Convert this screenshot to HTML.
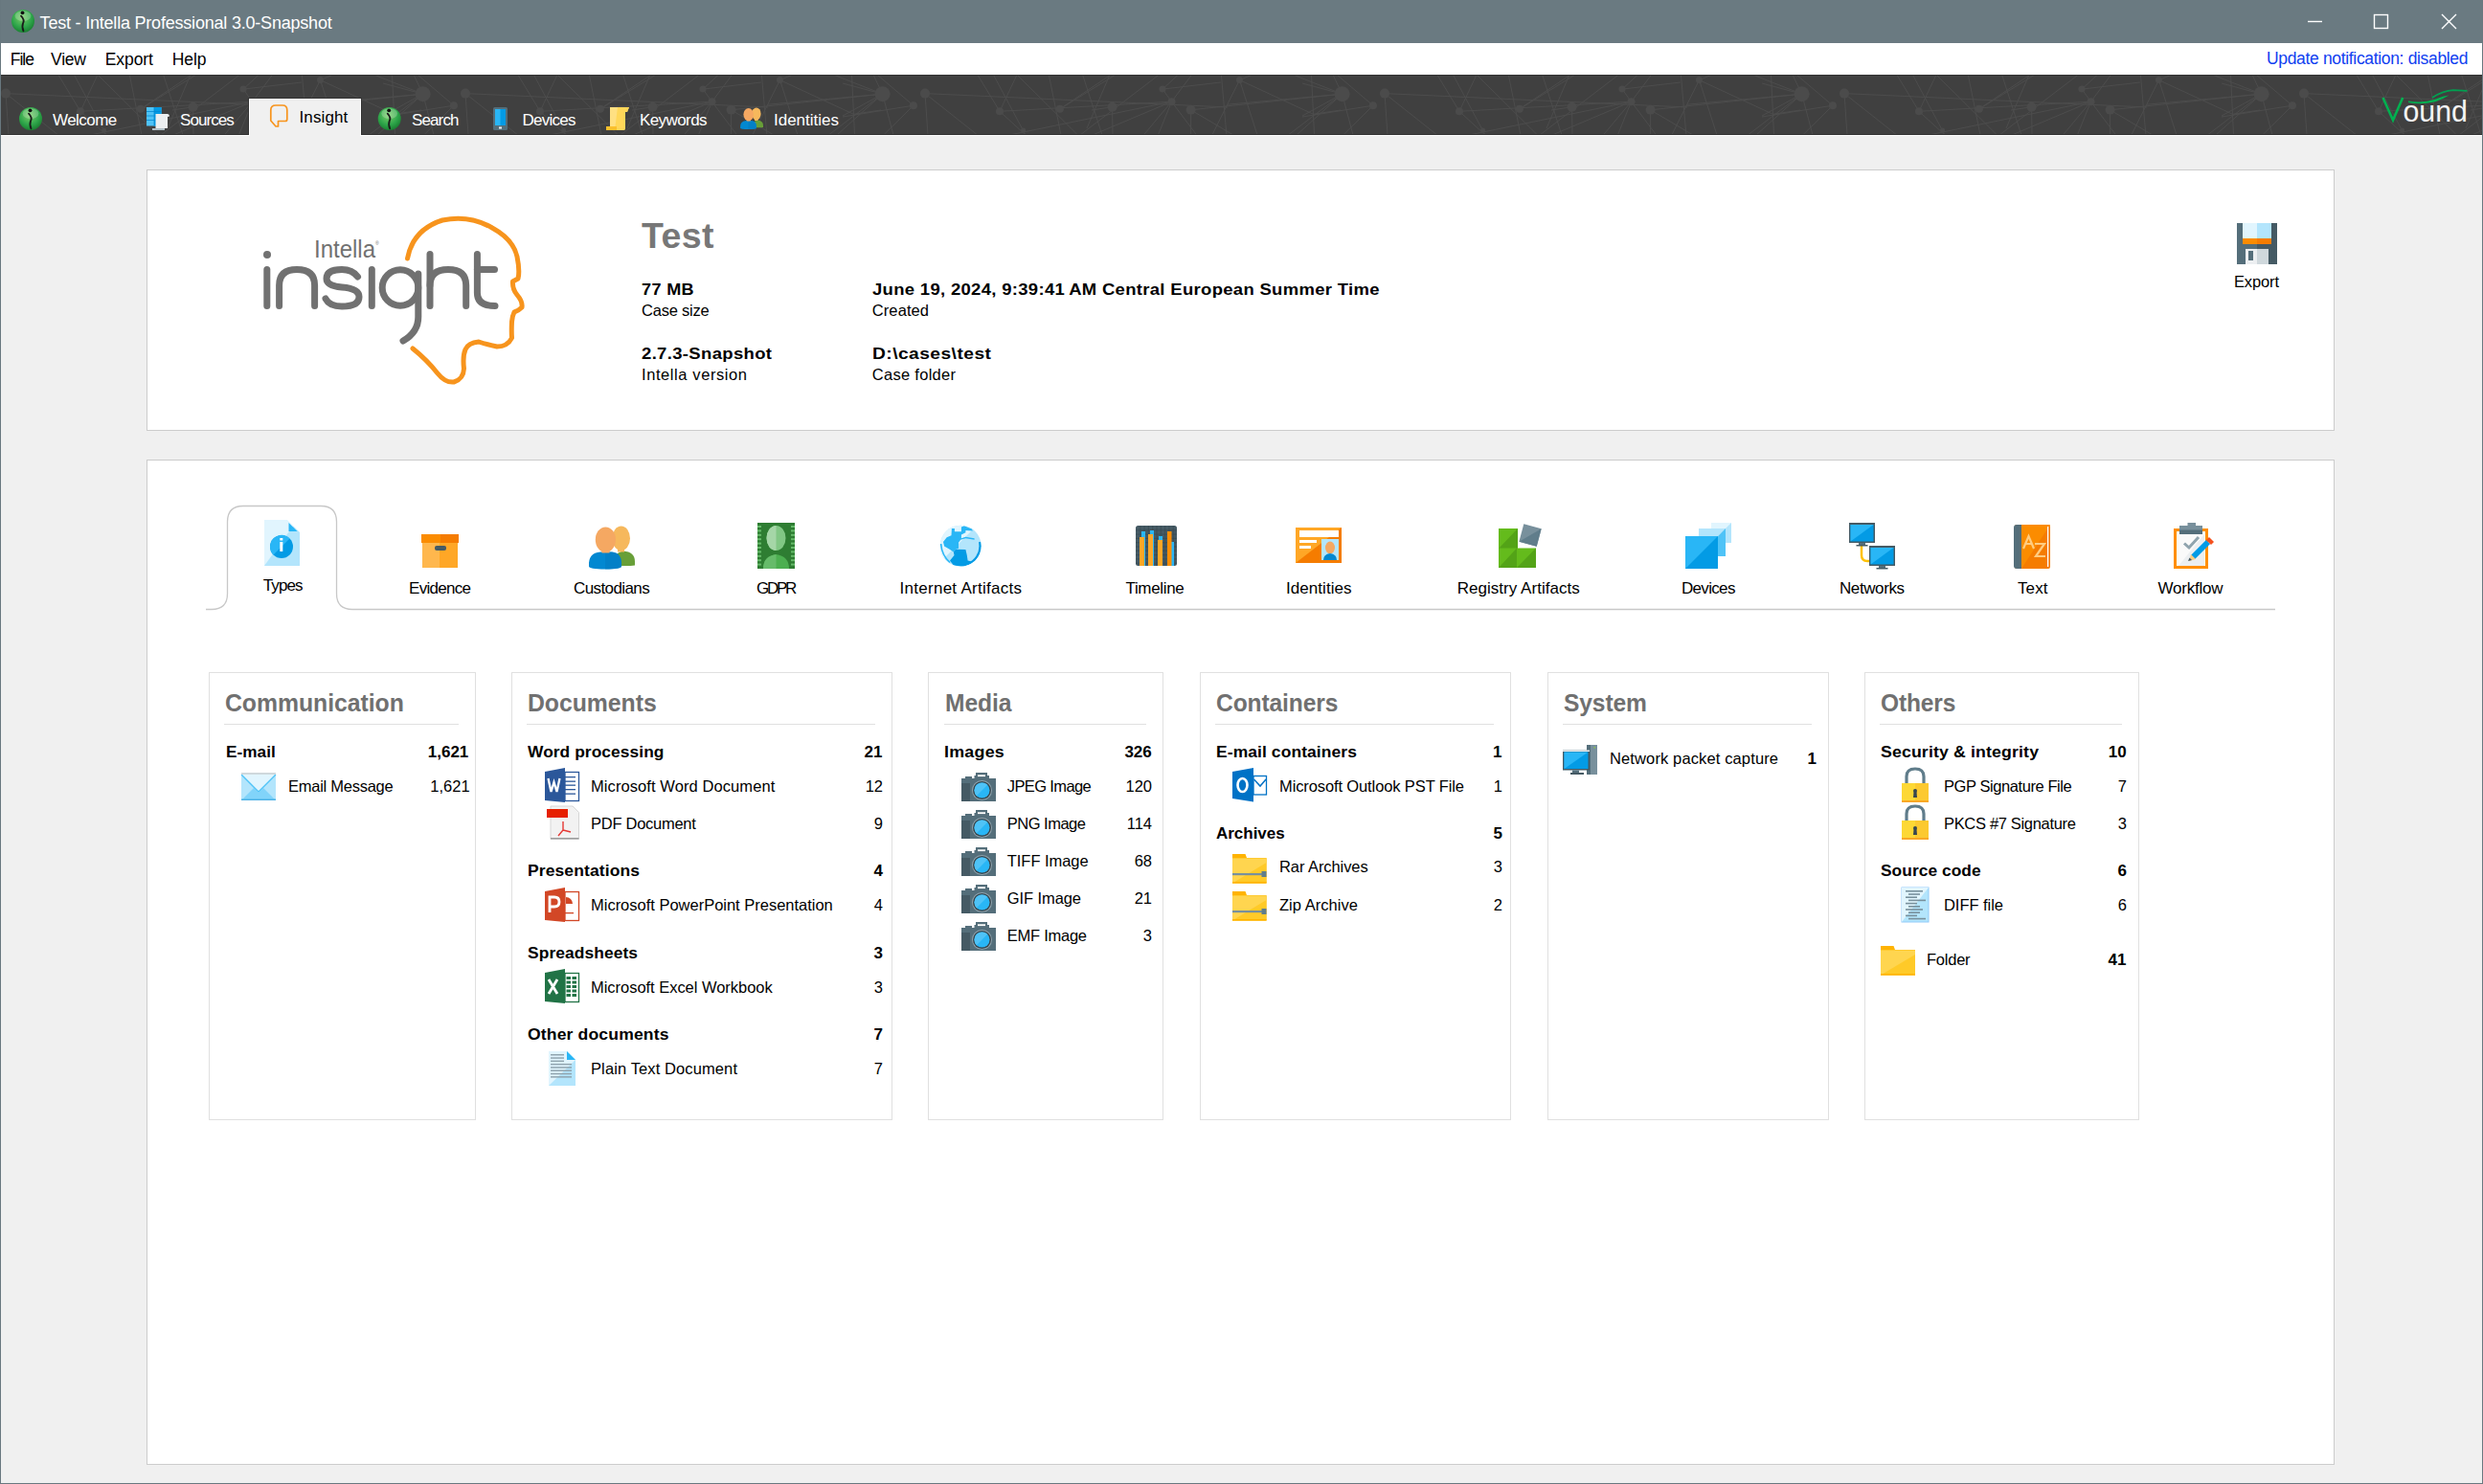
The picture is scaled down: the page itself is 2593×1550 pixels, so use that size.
<!DOCTYPE html>
<html><head><meta charset="utf-8"><style>
html,body{margin:0;padding:0}
body{width:2593px;height:1550px;position:relative;overflow:hidden;background:#f0f0f0;font-family:"Liberation Sans",sans-serif}
.t{position:absolute;white-space:pre}
.a{position:absolute}
</style></head><body>
<div class=a style="left:0;top:0;width:2593px;height:45px;background:#6a7a81"></div>
<div class=a style="left:1px;top:45px;width:2591px;height:33px;background:#fff"></div>
<div class=a style="left:1px;top:78px;width:2591px;height:63px;background:#404040;overflow:hidden"><svg style="position:absolute;left:0;top:0" width="2591" height="63"><g stroke="#595959" stroke-width="1" opacity="0.5"><line x1="-39.4" y1="20.2" x2="-81.0" y2="9.0"/><line x1="-39.4" y1="20.2" x2="-49.0" y2="0.0"/><line x1="-45.0" y1="0.0" x2="-7.1" y2="32.2"/><line x1="-39.4" y1="20.2" x2="-28.0" y2="63.0"/><line x1="-39.4" y1="20.2" x2="-81.0" y2="43.0"/><line x1="-7.1" y1="32.2" x2="-81.0" y2="44.0"/><line x1="-7.1" y1="32.2" x2="-38.3" y2="63.0"/><line x1="5.0" y1="19.6" x2="8.0" y2="63.0"/><line x1="5.0" y1="19.6" x2="321.0" y2="34.0"/><line x1="5.0" y1="19.6" x2="59.8" y2="63.0"/><line x1="59.8" y1="0.0" x2="83.0" y2="38.3"/><line x1="83.0" y1="38.3" x2="110.0" y2="63.0"/><line x1="76.4" y1="0.0" x2="110.0" y2="63.0"/><line x1="101.0" y1="0.0" x2="83.0" y2="38.3"/><line x1="101.0" y1="0.0" x2="164.5" y2="63.0"/><line x1="134.3" y1="0.0" x2="147.0" y2="63.0"/><line x1="145.9" y1="35.8" x2="199.0" y2="0.0"/><line x1="83.0" y1="38.3" x2="262.5" y2="28.2"/><line x1="169.6" y1="0.0" x2="190.0" y2="63.0"/><line x1="93.0" y1="63.0" x2="262.5" y2="28.2"/><line x1="145.9" y1="35.8" x2="204.0" y2="0.0"/><line x1="174.0" y1="56.0" x2="198.0" y2="0.0"/><line x1="200.6" y1="33.7" x2="201.0" y2="63.0"/><line x1="200.6" y1="33.7" x2="179.0" y2="37.0"/><line x1="233.3" y1="63.0" x2="262.5" y2="28.2"/><line x1="262.5" y1="28.2" x2="283.6" y2="0.0"/><line x1="248.4" y1="63.0" x2="262.5" y2="28.2"/><line x1="262.5" y1="28.2" x2="288.7" y2="63.0"/><line x1="253.0" y1="15.1" x2="262.5" y2="28.2"/><line x1="253.0" y1="15.1" x2="313.8" y2="8.0"/><line x1="253.0" y1="15.1" x2="269.5" y2="0.0"/><line x1="167.0" y1="63.0" x2="249.4" y2="0.0"/><line x1="180.0" y1="63.0" x2="262.5" y2="28.2"/><line x1="282.6" y1="36.8" x2="282.6" y2="63.0"/><line x1="282.6" y1="36.8" x2="440.6" y2="20.2"/><line x1="282.6" y1="36.8" x2="327.0" y2="63.0"/><line x1="314.4" y1="0.0" x2="319.9" y2="63.0"/><line x1="333.5" y1="5.6" x2="304.8" y2="63.0"/><line x1="333.5" y1="5.6" x2="352.0" y2="63.0"/><line x1="333.5" y1="5.6" x2="347.0" y2="0.0"/><line x1="333.5" y1="5.6" x2="410.5" y2="41.3"/><line x1="389.4" y1="0.0" x2="440.6" y2="20.2"/><line x1="408.5" y1="0.0" x2="411.5" y2="63.0"/><line x1="440.6" y1="20.2" x2="384.3" y2="63.0"/><line x1="440.6" y1="20.2" x2="393.0" y2="63.0"/><line x1="321.0" y1="31.2" x2="440.6" y2="20.2"/><line x1="410.5" y1="41.3" x2="439.0" y2="37.0"/><line x1="440.6" y1="20.2" x2="399.0" y2="9.0"/><line x1="440.6" y1="20.2" x2="431.0" y2="0.0"/><line x1="435.0" y1="0.0" x2="472.9" y2="32.2"/><line x1="440.6" y1="20.2" x2="452.0" y2="63.0"/><line x1="440.6" y1="20.2" x2="399.0" y2="43.0"/><line x1="472.9" y1="32.2" x2="399.0" y2="44.0"/><line x1="472.9" y1="32.2" x2="441.7" y2="63.0"/><line x1="485.0" y1="19.6" x2="488.0" y2="63.0"/><line x1="485.0" y1="19.6" x2="801.0" y2="34.0"/><line x1="485.0" y1="19.6" x2="539.8" y2="63.0"/><line x1="539.8" y1="0.0" x2="563.0" y2="38.3"/><line x1="563.0" y1="38.3" x2="590.0" y2="63.0"/><line x1="556.4" y1="0.0" x2="590.0" y2="63.0"/><line x1="581.0" y1="0.0" x2="563.0" y2="38.3"/><line x1="581.0" y1="0.0" x2="644.5" y2="63.0"/><line x1="614.3" y1="0.0" x2="627.0" y2="63.0"/><line x1="625.9" y1="35.8" x2="679.0" y2="0.0"/><line x1="563.0" y1="38.3" x2="742.5" y2="28.2"/><line x1="649.6" y1="0.0" x2="670.0" y2="63.0"/><line x1="573.0" y1="63.0" x2="742.5" y2="28.2"/><line x1="625.9" y1="35.8" x2="684.0" y2="0.0"/><line x1="654.0" y1="56.0" x2="678.0" y2="0.0"/><line x1="680.6" y1="33.7" x2="681.0" y2="63.0"/><line x1="680.6" y1="33.7" x2="659.0" y2="37.0"/><line x1="713.3" y1="63.0" x2="742.5" y2="28.2"/><line x1="742.5" y1="28.2" x2="763.6" y2="0.0"/><line x1="728.4" y1="63.0" x2="742.5" y2="28.2"/><line x1="742.5" y1="28.2" x2="768.7" y2="63.0"/><line x1="733.0" y1="15.1" x2="742.5" y2="28.2"/><line x1="733.0" y1="15.1" x2="793.8" y2="8.0"/><line x1="733.0" y1="15.1" x2="749.5" y2="0.0"/><line x1="647.0" y1="63.0" x2="729.4" y2="0.0"/><line x1="660.0" y1="63.0" x2="742.5" y2="28.2"/><line x1="762.6" y1="36.8" x2="762.6" y2="63.0"/><line x1="762.6" y1="36.8" x2="920.6" y2="20.2"/><line x1="762.6" y1="36.8" x2="807.0" y2="63.0"/><line x1="794.4" y1="0.0" x2="799.9" y2="63.0"/><line x1="813.5" y1="5.6" x2="784.8" y2="63.0"/><line x1="813.5" y1="5.6" x2="832.0" y2="63.0"/><line x1="813.5" y1="5.6" x2="827.0" y2="0.0"/><line x1="813.5" y1="5.6" x2="890.5" y2="41.3"/><line x1="869.4" y1="0.0" x2="920.6" y2="20.2"/><line x1="888.5" y1="0.0" x2="891.5" y2="63.0"/><line x1="920.6" y1="20.2" x2="864.3" y2="63.0"/><line x1="920.6" y1="20.2" x2="873.0" y2="63.0"/><line x1="801.0" y1="31.2" x2="920.6" y2="20.2"/><line x1="890.5" y1="41.3" x2="919.0" y2="37.0"/><line x1="920.6" y1="20.2" x2="879.0" y2="9.0"/><line x1="920.6" y1="20.2" x2="911.0" y2="0.0"/><line x1="915.0" y1="0.0" x2="952.9" y2="32.2"/><line x1="920.6" y1="20.2" x2="932.0" y2="63.0"/><line x1="920.6" y1="20.2" x2="879.0" y2="43.0"/><line x1="952.9" y1="32.2" x2="879.0" y2="44.0"/><line x1="952.9" y1="32.2" x2="921.7" y2="63.0"/><line x1="965.0" y1="19.6" x2="968.0" y2="63.0"/><line x1="965.0" y1="19.6" x2="1281.0" y2="34.0"/><line x1="965.0" y1="19.6" x2="1019.8" y2="63.0"/><line x1="1019.8" y1="0.0" x2="1043.0" y2="38.3"/><line x1="1043.0" y1="38.3" x2="1070.0" y2="63.0"/><line x1="1036.4" y1="0.0" x2="1070.0" y2="63.0"/><line x1="1061.0" y1="0.0" x2="1043.0" y2="38.3"/><line x1="1061.0" y1="0.0" x2="1124.5" y2="63.0"/><line x1="1094.3" y1="0.0" x2="1107.0" y2="63.0"/><line x1="1105.9" y1="35.8" x2="1159.0" y2="0.0"/><line x1="1043.0" y1="38.3" x2="1222.5" y2="28.2"/><line x1="1129.6" y1="0.0" x2="1150.0" y2="63.0"/><line x1="1053.0" y1="63.0" x2="1222.5" y2="28.2"/><line x1="1105.9" y1="35.8" x2="1164.0" y2="0.0"/><line x1="1134.0" y1="56.0" x2="1158.0" y2="0.0"/><line x1="1160.6" y1="33.7" x2="1161.0" y2="63.0"/><line x1="1160.6" y1="33.7" x2="1139.0" y2="37.0"/><line x1="1193.3" y1="63.0" x2="1222.5" y2="28.2"/><line x1="1222.5" y1="28.2" x2="1243.6" y2="0.0"/><line x1="1208.4" y1="63.0" x2="1222.5" y2="28.2"/><line x1="1222.5" y1="28.2" x2="1248.7" y2="63.0"/><line x1="1213.0" y1="15.1" x2="1222.5" y2="28.2"/><line x1="1213.0" y1="15.1" x2="1273.8" y2="8.0"/><line x1="1213.0" y1="15.1" x2="1229.5" y2="0.0"/><line x1="1127.0" y1="63.0" x2="1209.4" y2="0.0"/><line x1="1140.0" y1="63.0" x2="1222.5" y2="28.2"/><line x1="1242.6" y1="36.8" x2="1242.6" y2="63.0"/><line x1="1242.6" y1="36.8" x2="1400.6" y2="20.2"/><line x1="1242.6" y1="36.8" x2="1287.0" y2="63.0"/><line x1="1274.4" y1="0.0" x2="1279.9" y2="63.0"/><line x1="1293.5" y1="5.6" x2="1264.8" y2="63.0"/><line x1="1293.5" y1="5.6" x2="1312.0" y2="63.0"/><line x1="1293.5" y1="5.6" x2="1307.0" y2="0.0"/><line x1="1293.5" y1="5.6" x2="1370.5" y2="41.3"/><line x1="1349.4" y1="0.0" x2="1400.6" y2="20.2"/><line x1="1368.5" y1="0.0" x2="1371.5" y2="63.0"/><line x1="1400.6" y1="20.2" x2="1344.3" y2="63.0"/><line x1="1400.6" y1="20.2" x2="1353.0" y2="63.0"/><line x1="1281.0" y1="31.2" x2="1400.6" y2="20.2"/><line x1="1370.5" y1="41.3" x2="1399.0" y2="37.0"/><line x1="1400.6" y1="20.2" x2="1359.0" y2="9.0"/><line x1="1400.6" y1="20.2" x2="1391.0" y2="0.0"/><line x1="1395.0" y1="0.0" x2="1432.9" y2="32.2"/><line x1="1400.6" y1="20.2" x2="1412.0" y2="63.0"/><line x1="1400.6" y1="20.2" x2="1359.0" y2="43.0"/><line x1="1432.9" y1="32.2" x2="1359.0" y2="44.0"/><line x1="1432.9" y1="32.2" x2="1401.7" y2="63.0"/><line x1="1445.0" y1="19.6" x2="1448.0" y2="63.0"/><line x1="1445.0" y1="19.6" x2="1761.0" y2="34.0"/><line x1="1445.0" y1="19.6" x2="1499.8" y2="63.0"/><line x1="1499.8" y1="0.0" x2="1523.0" y2="38.3"/><line x1="1523.0" y1="38.3" x2="1550.0" y2="63.0"/><line x1="1516.4" y1="0.0" x2="1550.0" y2="63.0"/><line x1="1541.0" y1="0.0" x2="1523.0" y2="38.3"/><line x1="1541.0" y1="0.0" x2="1604.5" y2="63.0"/><line x1="1574.3" y1="0.0" x2="1587.0" y2="63.0"/><line x1="1585.9" y1="35.8" x2="1639.0" y2="0.0"/><line x1="1523.0" y1="38.3" x2="1702.5" y2="28.2"/><line x1="1609.6" y1="0.0" x2="1630.0" y2="63.0"/><line x1="1533.0" y1="63.0" x2="1702.5" y2="28.2"/><line x1="1585.9" y1="35.8" x2="1644.0" y2="0.0"/><line x1="1614.0" y1="56.0" x2="1638.0" y2="0.0"/><line x1="1640.6" y1="33.7" x2="1641.0" y2="63.0"/><line x1="1640.6" y1="33.7" x2="1619.0" y2="37.0"/><line x1="1673.3" y1="63.0" x2="1702.5" y2="28.2"/><line x1="1702.5" y1="28.2" x2="1723.6" y2="0.0"/><line x1="1688.4" y1="63.0" x2="1702.5" y2="28.2"/><line x1="1702.5" y1="28.2" x2="1728.7" y2="63.0"/><line x1="1693.0" y1="15.1" x2="1702.5" y2="28.2"/><line x1="1693.0" y1="15.1" x2="1753.8" y2="8.0"/><line x1="1693.0" y1="15.1" x2="1709.5" y2="0.0"/><line x1="1607.0" y1="63.0" x2="1689.4" y2="0.0"/><line x1="1620.0" y1="63.0" x2="1702.5" y2="28.2"/><line x1="1722.6" y1="36.8" x2="1722.6" y2="63.0"/><line x1="1722.6" y1="36.8" x2="1880.6" y2="20.2"/><line x1="1722.6" y1="36.8" x2="1767.0" y2="63.0"/><line x1="1754.4" y1="0.0" x2="1759.9" y2="63.0"/><line x1="1773.5" y1="5.6" x2="1744.8" y2="63.0"/><line x1="1773.5" y1="5.6" x2="1792.0" y2="63.0"/><line x1="1773.5" y1="5.6" x2="1787.0" y2="0.0"/><line x1="1773.5" y1="5.6" x2="1850.5" y2="41.3"/><line x1="1829.4" y1="0.0" x2="1880.6" y2="20.2"/><line x1="1848.5" y1="0.0" x2="1851.5" y2="63.0"/><line x1="1880.6" y1="20.2" x2="1824.3" y2="63.0"/><line x1="1880.6" y1="20.2" x2="1833.0" y2="63.0"/><line x1="1761.0" y1="31.2" x2="1880.6" y2="20.2"/><line x1="1850.5" y1="41.3" x2="1879.0" y2="37.0"/><line x1="1880.6" y1="20.2" x2="1839.0" y2="9.0"/><line x1="1880.6" y1="20.2" x2="1871.0" y2="0.0"/><line x1="1875.0" y1="0.0" x2="1912.9" y2="32.2"/><line x1="1880.6" y1="20.2" x2="1892.0" y2="63.0"/><line x1="1880.6" y1="20.2" x2="1839.0" y2="43.0"/><line x1="1912.9" y1="32.2" x2="1839.0" y2="44.0"/><line x1="1912.9" y1="32.2" x2="1881.7" y2="63.0"/><line x1="1925.0" y1="19.6" x2="1928.0" y2="63.0"/><line x1="1925.0" y1="19.6" x2="2241.0" y2="34.0"/><line x1="1925.0" y1="19.6" x2="1979.8" y2="63.0"/><line x1="1979.8" y1="0.0" x2="2003.0" y2="38.3"/><line x1="2003.0" y1="38.3" x2="2030.0" y2="63.0"/><line x1="1996.4" y1="0.0" x2="2030.0" y2="63.0"/><line x1="2021.0" y1="0.0" x2="2003.0" y2="38.3"/><line x1="2021.0" y1="0.0" x2="2084.5" y2="63.0"/><line x1="2054.3" y1="0.0" x2="2067.0" y2="63.0"/><line x1="2065.9" y1="35.8" x2="2119.0" y2="0.0"/><line x1="2003.0" y1="38.3" x2="2182.5" y2="28.2"/><line x1="2089.6" y1="0.0" x2="2110.0" y2="63.0"/><line x1="2013.0" y1="63.0" x2="2182.5" y2="28.2"/><line x1="2065.9" y1="35.8" x2="2124.0" y2="0.0"/><line x1="2094.0" y1="56.0" x2="2118.0" y2="0.0"/><line x1="2120.6" y1="33.7" x2="2121.0" y2="63.0"/><line x1="2120.6" y1="33.7" x2="2099.0" y2="37.0"/><line x1="2153.3" y1="63.0" x2="2182.5" y2="28.2"/><line x1="2182.5" y1="28.2" x2="2203.6" y2="0.0"/><line x1="2168.4" y1="63.0" x2="2182.5" y2="28.2"/><line x1="2182.5" y1="28.2" x2="2208.7" y2="63.0"/><line x1="2173.0" y1="15.1" x2="2182.5" y2="28.2"/><line x1="2173.0" y1="15.1" x2="2233.8" y2="8.0"/><line x1="2173.0" y1="15.1" x2="2189.5" y2="0.0"/><line x1="2087.0" y1="63.0" x2="2169.4" y2="0.0"/><line x1="2100.0" y1="63.0" x2="2182.5" y2="28.2"/><line x1="2202.6" y1="36.8" x2="2202.6" y2="63.0"/><line x1="2202.6" y1="36.8" x2="2360.6" y2="20.2"/><line x1="2202.6" y1="36.8" x2="2247.0" y2="63.0"/><line x1="2234.4" y1="0.0" x2="2239.9" y2="63.0"/><line x1="2253.5" y1="5.6" x2="2224.8" y2="63.0"/><line x1="2253.5" y1="5.6" x2="2272.0" y2="63.0"/><line x1="2253.5" y1="5.6" x2="2267.0" y2="0.0"/><line x1="2253.5" y1="5.6" x2="2330.5" y2="41.3"/><line x1="2309.4" y1="0.0" x2="2360.6" y2="20.2"/><line x1="2328.5" y1="0.0" x2="2331.5" y2="63.0"/><line x1="2360.6" y1="20.2" x2="2304.3" y2="63.0"/><line x1="2360.6" y1="20.2" x2="2313.0" y2="63.0"/><line x1="2241.0" y1="31.2" x2="2360.6" y2="20.2"/><line x1="2330.5" y1="41.3" x2="2359.0" y2="37.0"/><line x1="2360.6" y1="20.2" x2="2319.0" y2="9.0"/><line x1="2360.6" y1="20.2" x2="2351.0" y2="0.0"/><line x1="2355.0" y1="0.0" x2="2392.9" y2="32.2"/><line x1="2360.6" y1="20.2" x2="2372.0" y2="63.0"/><line x1="2360.6" y1="20.2" x2="2319.0" y2="43.0"/><line x1="2392.9" y1="32.2" x2="2319.0" y2="44.0"/><line x1="2392.9" y1="32.2" x2="2361.7" y2="63.0"/><line x1="2405.0" y1="19.6" x2="2408.0" y2="63.0"/><line x1="2405.0" y1="19.6" x2="2721.0" y2="34.0"/><line x1="2405.0" y1="19.6" x2="2459.8" y2="63.0"/><line x1="2459.8" y1="0.0" x2="2483.0" y2="38.3"/><line x1="2483.0" y1="38.3" x2="2510.0" y2="63.0"/><line x1="2476.4" y1="0.0" x2="2510.0" y2="63.0"/><line x1="2501.0" y1="0.0" x2="2483.0" y2="38.3"/><line x1="2501.0" y1="0.0" x2="2564.5" y2="63.0"/><line x1="2534.3" y1="0.0" x2="2547.0" y2="63.0"/><line x1="2545.9" y1="35.8" x2="2599.0" y2="0.0"/><line x1="2483.0" y1="38.3" x2="2662.5" y2="28.2"/><line x1="2569.6" y1="0.0" x2="2590.0" y2="63.0"/><line x1="2493.0" y1="63.0" x2="2662.5" y2="28.2"/><line x1="2545.9" y1="35.8" x2="2604.0" y2="0.0"/><line x1="2574.0" y1="56.0" x2="2598.0" y2="0.0"/><line x1="2600.6" y1="33.7" x2="2601.0" y2="63.0"/><line x1="2600.6" y1="33.7" x2="2579.0" y2="37.0"/><line x1="2633.3" y1="63.0" x2="2662.5" y2="28.2"/><line x1="2662.5" y1="28.2" x2="2683.6" y2="0.0"/><line x1="2648.4" y1="63.0" x2="2662.5" y2="28.2"/><line x1="2662.5" y1="28.2" x2="2688.7" y2="63.0"/><line x1="2653.0" y1="15.1" x2="2662.5" y2="28.2"/><line x1="2653.0" y1="15.1" x2="2713.8" y2="8.0"/><line x1="2653.0" y1="15.1" x2="2669.5" y2="0.0"/><line x1="2567.0" y1="63.0" x2="2649.4" y2="0.0"/><line x1="2580.0" y1="63.0" x2="2662.5" y2="28.2"/><line x1="2682.6" y1="36.8" x2="2682.6" y2="63.0"/><line x1="2682.6" y1="36.8" x2="2840.6" y2="20.2"/><line x1="2682.6" y1="36.8" x2="2727.0" y2="63.0"/><line x1="2714.4" y1="0.0" x2="2719.9" y2="63.0"/><line x1="2733.5" y1="5.6" x2="2704.8" y2="63.0"/><line x1="2733.5" y1="5.6" x2="2752.0" y2="63.0"/><line x1="2733.5" y1="5.6" x2="2747.0" y2="0.0"/><line x1="2733.5" y1="5.6" x2="2810.5" y2="41.3"/><line x1="2789.4" y1="0.0" x2="2840.6" y2="20.2"/><line x1="2808.5" y1="0.0" x2="2811.5" y2="63.0"/><line x1="2840.6" y1="20.2" x2="2784.3" y2="63.0"/><line x1="2840.6" y1="20.2" x2="2793.0" y2="63.0"/><line x1="2721.0" y1="31.2" x2="2840.6" y2="20.2"/><line x1="2810.5" y1="41.3" x2="2839.0" y2="37.0"/></g><g fill="#4b4b4b"><circle cx="-39.4" cy="20.2" r="8"/><circle cx="-7.1" cy="32.2" r="4"/><circle cx="5.0" cy="19.6" r="5"/><circle cx="83.0" cy="38.3" r="4"/><circle cx="145.9" cy="35.8" r="4"/><circle cx="107.6" cy="58.0" r="2.5"/><circle cx="200.6" cy="33.7" r="5"/><circle cx="253.0" cy="15.1" r="3.5"/><circle cx="262.5" cy="28.2" r="4"/><circle cx="282.6" cy="36.8" r="5"/><circle cx="333.5" cy="5.6" r="3.5"/><circle cx="440.6" cy="20.2" r="8"/><circle cx="472.9" cy="32.2" r="4"/><circle cx="485.0" cy="19.6" r="5"/><circle cx="563.0" cy="38.3" r="4"/><circle cx="625.9" cy="35.8" r="4"/><circle cx="587.6" cy="58.0" r="2.5"/><circle cx="680.6" cy="33.7" r="5"/><circle cx="733.0" cy="15.1" r="3.5"/><circle cx="742.5" cy="28.2" r="4"/><circle cx="762.6" cy="36.8" r="5"/><circle cx="813.5" cy="5.6" r="3.5"/><circle cx="920.6" cy="20.2" r="8"/><circle cx="952.9" cy="32.2" r="4"/><circle cx="965.0" cy="19.6" r="5"/><circle cx="1043.0" cy="38.3" r="4"/><circle cx="1105.9" cy="35.8" r="4"/><circle cx="1067.6" cy="58.0" r="2.5"/><circle cx="1160.6" cy="33.7" r="5"/><circle cx="1213.0" cy="15.1" r="3.5"/><circle cx="1222.5" cy="28.2" r="4"/><circle cx="1242.6" cy="36.8" r="5"/><circle cx="1293.5" cy="5.6" r="3.5"/><circle cx="1400.6" cy="20.2" r="8"/><circle cx="1432.9" cy="32.2" r="4"/><circle cx="1445.0" cy="19.6" r="5"/><circle cx="1523.0" cy="38.3" r="4"/><circle cx="1585.9" cy="35.8" r="4"/><circle cx="1547.6" cy="58.0" r="2.5"/><circle cx="1640.6" cy="33.7" r="5"/><circle cx="1693.0" cy="15.1" r="3.5"/><circle cx="1702.5" cy="28.2" r="4"/><circle cx="1722.6" cy="36.8" r="5"/><circle cx="1773.5" cy="5.6" r="3.5"/><circle cx="1880.6" cy="20.2" r="8"/><circle cx="1912.9" cy="32.2" r="4"/><circle cx="1925.0" cy="19.6" r="5"/><circle cx="2003.0" cy="38.3" r="4"/><circle cx="2065.9" cy="35.8" r="4"/><circle cx="2027.6" cy="58.0" r="2.5"/><circle cx="2120.6" cy="33.7" r="5"/><circle cx="2173.0" cy="15.1" r="3.5"/><circle cx="2182.5" cy="28.2" r="4"/><circle cx="2202.6" cy="36.8" r="5"/><circle cx="2253.5" cy="5.6" r="3.5"/><circle cx="2360.6" cy="20.2" r="8"/><circle cx="2392.9" cy="32.2" r="4"/><circle cx="2405.0" cy="19.6" r="5"/><circle cx="2483.0" cy="38.3" r="4"/><circle cx="2545.9" cy="35.8" r="4"/><circle cx="2507.6" cy="58.0" r="2.5"/><circle cx="2600.6" cy="33.7" r="5"/><circle cx="2653.0" cy="15.1" r="3.5"/><circle cx="2662.5" cy="28.2" r="4"/><circle cx="2682.6" cy="36.8" r="5"/><circle cx="2733.5" cy="5.6" r="3.5"/></g><g transform="translate(-1,-78)"><path d="M2488.5 102L2499 125.5L2509.2 102" fill="none" stroke="#00b050" stroke-width="2.6"/><path d="M2515 105.5Q2532 108.5 2546 102.5Q2552 100 2557.5 99.5Q2552 103 2544 106Q2530 110 2515 107Z" fill="#00b050"/><path d="M2540 102Q2551 95 2562 94.2L2576.5 94.8" fill="none" stroke="#00a050" stroke-width="1.8"/><text x="2509.5" y="126.8" font-family="Liberation Sans" font-size="31" fill="#f4f4f4" textLength="67.5" lengthAdjust="spacingAndGlyphs">ound</text></g></svg></div>
<div class=a style="left:1px;top:78px;width:2591px;height:1px;background:#333"></div><div class=a style="left:1px;top:140px;width:2591px;height:1px;background:#333"></div><div class=a style="left:1px;top:141px;width:2591px;height:1px;background:#fdfdfd"></div><div class=a style="left:259px;top:102px;width:119px;height:39px;background:#333"></div><div class=a style="left:260px;top:103px;width:117px;height:39px;background:#fdfdfd"></div><div class=a style="left:261px;top:104px;width:115px;height:38px;background:#f0f0f0"></div>
<div class=a style="left:0;top:0;width:1px;height:1550px;background:#68787f"></div>
<div class=a style="left:2592px;top:0;width:1px;height:1550px;background:#68787f"></div>
<div class=a style="left:0;top:1549px;width:2593px;height:1px;background:#68787f"></div>
<div class=a style="left:153px;top:177px;width:2283px;height:271px;border:1px solid #cccccc;background:#fff"></div>
<div class=a style="left:153px;top:480px;width:2283px;height:1048px;border:1px solid #cccccc;background:#fff"></div>
<svg class=a style="left:0;top:0" width="2593" height="1550">
<path d="M215 636.5 H221 Q237.5 636.5 237.5 620 V545 Q237.5 528.5 254 528.5 H335 Q351.5 528.5 351.5 545 V620 Q351.5 636.5 368 636.5 H2376" fill="none" stroke="#c8c8c8" stroke-width="1.3"/>
<g stroke="#fff" stroke-width="1.4" fill="none">
<path d="M2410 22.5 H2425"/>
<rect x="2479.5" y="15.5" width="14" height="14"/>
<path d="M2550 15 L2565 30 M2565 15 L2550 30"/>
</g>
</svg>
<div style='position:absolute;left:218px;top:702px;width:277px;height:466px;border:1px solid #e0e0e0;background:#fff'></div><div style='position:absolute;left:534px;top:702px;width:396px;height:466px;border:1px solid #e0e0e0;background:#fff'></div><div style='position:absolute;left:969px;top:702px;width:244px;height:466px;border:1px solid #e0e0e0;background:#fff'></div><div style='position:absolute;left:1253px;top:702px;width:323px;height:466px;border:1px solid #e0e0e0;background:#fff'></div><div style='position:absolute;left:1616px;top:702px;width:292px;height:466px;border:1px solid #e0e0e0;background:#fff'></div><div style='position:absolute;left:1947px;top:702px;width:285px;height:466px;border:1px solid #e0e0e0;background:#fff'></div><div style='position:absolute;left:234px;top:756px;width:245px;height:1px;background:#e0e0e0'></div><div style='position:absolute;left:550px;top:756px;width:364px;height:1px;background:#e0e0e0'></div><div style='position:absolute;left:986px;top:756px;width:211px;height:1px;background:#e0e0e0'></div><div style='position:absolute;left:1269px;top:756px;width:291px;height:1px;background:#e0e0e0'></div><div style='position:absolute;left:1632px;top:756px;width:260px;height:1px;background:#e0e0e0'></div><div style='position:absolute;left:1963px;top:756px;width:253px;height:1px;background:#e0e0e0'></div>
<svg class=a style="left:0;top:0" width="2593" height="1550"><defs><radialGradient id="gsph" cx="0.45" cy="0.35" r="0.7"><stop offset="0" stop-color="#7ccf6a"/><stop offset="0.6" stop-color="#2ea54a"/><stop offset="1" stop-color="#16782c"/></radialGradient></defs><circle cx="24" cy="22" r="12" fill="url(#gsph)"/><ellipse cx="24" cy="16.6" rx="8.399999999999999" ry="5.4" fill="#fff" opacity="0.22"/><circle cx="23.5" cy="13.36" r="1.92" fill="#111"/><path d="M22 16.6 Q26 20.8 24 24.4 Q22.5 28.6 24.5 32.2" stroke="#1a1a1a" stroke-width="1.7999999999999998" fill="none" stroke-linecap="round"/><circle cx="32" cy="124" r="12" fill="url(#gsph)"/><ellipse cx="32" cy="118.6" rx="8.399999999999999" ry="5.4" fill="#fff" opacity="0.22"/><circle cx="31.5" cy="115.36" r="1.92" fill="#111"/><path d="M30 118.6 Q34 122.8 32 126.4 Q30.5 130.6 32.5 134.2" stroke="#1a1a1a" stroke-width="1.7999999999999998" fill="none" stroke-linecap="round"/><circle cx="406.7" cy="124" r="12" fill="url(#gsph)"/><ellipse cx="406.7" cy="118.6" rx="8.399999999999999" ry="5.4" fill="#fff" opacity="0.22"/><circle cx="406.2" cy="115.36" r="1.92" fill="#111"/><path d="M404.7 118.6 Q408.7 122.8 406.7 126.4 Q405.2 130.6 407.2 134.2" stroke="#1a1a1a" stroke-width="1.7999999999999998" fill="none" stroke-linecap="round"/><g><rect x="153" y="112" width="15.5" height="19.5" fill="#4fc3f7"/><rect x="161" y="112" width="7.5" height="19.5" fill="#039be5"/><path d="M153 116.5H168.5M153 121H168.5M153 125.5H168.5M161 112V131.5" stroke="#0288d1" stroke-width="0.8"/><path d="M162.5 119H175Q177 119 177 121.5L175 122V134H162.5Z" fill="#eceff1"/><rect x="159" y="134" width="13" height="2" fill="#b0bec5"/></g><path d="M290.5 126.5H298Q299.8 126.5 299.8 124.5V115Q299.8 110 295 110H288Q282.8 110 282.8 115V126L288 132H290.5Z" fill="none" stroke="#f7941d" stroke-width="1.7" stroke-linejoin="round"/><rect x="515" y="112" width="15" height="24" rx="1.5" fill="#546e7a"/><rect x="517" y="114" width="11" height="17" fill="#29b6f6"/><rect x="522.5" y="114" width="5.5" height="17" fill="#039be5"/><rect x="521" y="132.5" width="3" height="2" fill="#eceff1"/><path d="M637 112H657L655 117H653V134Q653 136 651 136H633L634 132H637Z" fill="#ffe082"/><path d="M645 112H657L655 117H653V134Q653 136 651 136H642Z" fill="#ffd54f" opacity="0.8"/><rect x="633" y="132" width="11" height="4" fill="#fbc02d"/><path d="M785.5 135.0 Q785.0 126.5 791.0 125.5 Q797.0 126.0 797.0 131.0 L797.0 133.0 Q793.0 133.5 785.5 133.0 Z" fill="#689f38"/><ellipse cx="789.9" cy="118.9" rx="4.7" ry="6.4" fill="#f6b85c"/><rect x="788.0" y="123.0" width="3.5" height="3.0" fill="#f6b85c"/><path d="M773.0 133.5 Q772.5 126.5 779.0 126.0 L785.0 126.0 Q790.5 126.5 790.0 133.5 Q790.0 135.0 781.5 135.0 Q773.0 135.0 773.0 133.5 Z" fill="#0288d1"/><path d="M781.5 126.0 L785.0 126.0 Q790.5 126.5 790.0 133.5 Q790.0 135.0 781.5 135.0 Z" fill="#0277bd" opacity="0.5"/><ellipse cx="781.7" cy="119.6" rx="5.3" ry="6.6" fill="#f5a862"/><rect x="779.8" y="124.0" width="4.0" height="2.5" fill="#f5a862"/><g><path d="M2336 233H2378V276H2340Q2336 276 2336 272Z" fill="#455a64"/><rect x="2336" y="233" width="21" height="43" fill="#546e7a"/><rect x="2342" y="233" width="30" height="16" fill="#b3e5fc"/><rect x="2342" y="233" width="15" height="16" fill="#e1f5fe"/><rect x="2342" y="249" width="30" height="6" fill="#f57c00"/><rect x="2342" y="249" width="15" height="6" fill="#fb8c00"/><rect x="2345" y="260" width="24" height="16" fill="#cfd8dc"/><rect x="2345" y="260" width="12" height="16" fill="#eceff1"/><rect x="2348" y="262" width="5" height="10" fill="#546e7a"/></g><g fill="none" stroke="#717171" stroke-width="7" stroke-linecap="round"><path d="M278.8 281.5V319.5"/><path d="M291.6 319.5V298Q291.6 281.5 310 281.5Q328.6 281.5 328.6 298V319.5"/><path d="M373.5 289Q368 281.5 357 281.5Q341 281.5 341 291Q341 298.5 357 300Q375 301.5 375 310Q375 320 357 320Q344 320 340 312"/><path d="M388.3 281.5V319.5"/><circle cx="418" cy="300.5" r="18.8"/><path d="M436.8 286V331Q436.8 347 421 356"/><path d="M449 265.5V319.5"/><path d="M449 298Q449 281.5 468 281.5Q486.7 281.5 486.7 298V319.5"/><path d="M498.4 265.5V306Q498.4 319.5 517 319.5"/><path d="M498.4 281.5H516.5"/></g><circle cx="279" cy="266" r="4" fill="#717171"/><text x="328" y="269" font-family="Liberation Sans" font-size="25" fill="#717171" textLength="64" lengthAdjust="spacingAndGlyphs">Intella</text><text x="392" y="256" font-family="Liberation Sans" font-size="5" fill="#717171">®</text><path d="M425.5 270Q431 240 462 230Q490 224 514 238Q536 250 540 268Q543 283 541 291L535.5 294Q535 302 540 308Q546 315 545 321Q541 325 537 326Q535 330 534.5 336Q534 346 534.5 353Q530 362 519 362Q509 360 500 357Q489 358 486 365Q483 372 484.5 385Q484 396 474 399Q465 400 457 390Q446 376 431 364" fill="none" stroke="#f7941d" stroke-width="5" stroke-linecap="round" stroke-linejoin="round"/><g><path d="M276 543H299.5L313 556V591H276Z" fill="#b3e5fc"/><path d="M276 543H299.5L306 549.5L276 591Z" fill="#e1f5fe"/><path d="M301 545L313 557V545Z" fill="#29b6f6" opacity="0"/><path d="M301.5 546L310.5 555H301.5Z" fill="#29b6f6"/><circle cx="294" cy="571" r="12" fill="#039be5"/><path d="M282 571A12 12 0 0 1 302.5 562.5L285.5 579.5A12 12 0 0 1 282 571Z" fill="#29b6f6"/><rect x="292.3" y="566" width="3" height="10" fill="#fff"/><rect x="292.3" y="562" width="3" height="2.5" fill="#fff"/></g><g><rect x="441" y="567" width="37" height="26" fill="#ffa726"/><rect x="441" y="567" width="18" height="26" fill="#ffb74d"/><rect x="440" y="558" width="39" height="9" fill="#f57c00"/><rect x="440" y="558" width="20" height="9" fill="#fb8c00"/><rect x="454" y="570" width="12" height="5" rx="2" fill="#455a64"/></g><path d="M640.0 594.5 Q639.0 577.5 651.0 575.5 Q663.0 576.5 663.0 586.5 L663.0 590.5 Q655.0 591.5 640.0 590.5 Z" fill="#689f38"/><ellipse cx="648.7" cy="562.3" rx="9.3" ry="12.8" fill="#f6b85c"/><rect x="645.0" y="570.5" width="7.0" height="6.0" fill="#f6b85c"/><path d="M615.0 591.5 Q614.0 577.5 627.0 576.5 L639.0 576.5 Q650.0 577.5 649.0 591.5 Q649.0 594.5 632.0 594.5 Q615.0 594.5 615.0 591.5 Z" fill="#0288d1"/><path d="M632.0 576.5 L639.0 576.5 Q650.0 577.5 649.0 591.5 Q649.0 594.5 632.0 594.5 Z" fill="#0277bd" opacity="0.5"/><ellipse cx="632.4" cy="563.7" rx="10.6" ry="13.2" fill="#f5a862"/><rect x="628.5" y="572.5" width="8.0" height="5.0" fill="#f5a862"/><g><rect x="791" y="546" width="39" height="48" fill="#2e7d32"/><rect x="791" y="549.0" width="4" height="2" fill="#66bb6a"/><rect x="826" y="549.0" width="4" height="2" fill="#66bb6a"/><rect x="791" y="553.4" width="4" height="2" fill="#66bb6a"/><rect x="826" y="553.4" width="4" height="2" fill="#66bb6a"/><rect x="791" y="557.8" width="4" height="2" fill="#66bb6a"/><rect x="826" y="557.8" width="4" height="2" fill="#66bb6a"/><rect x="791" y="562.2" width="4" height="2" fill="#66bb6a"/><rect x="826" y="562.2" width="4" height="2" fill="#66bb6a"/><rect x="791" y="566.6" width="4" height="2" fill="#66bb6a"/><rect x="826" y="566.6" width="4" height="2" fill="#66bb6a"/><rect x="791" y="571.0" width="4" height="2" fill="#66bb6a"/><rect x="826" y="571.0" width="4" height="2" fill="#66bb6a"/><rect x="791" y="575.4" width="4" height="2" fill="#66bb6a"/><rect x="826" y="575.4" width="4" height="2" fill="#66bb6a"/><rect x="791" y="579.8" width="4" height="2" fill="#66bb6a"/><rect x="826" y="579.8" width="4" height="2" fill="#66bb6a"/><rect x="791" y="584.2" width="4" height="2" fill="#66bb6a"/><rect x="826" y="584.2" width="4" height="2" fill="#66bb6a"/><rect x="791" y="588.6" width="4" height="2" fill="#66bb6a"/><rect x="826" y="588.6" width="4" height="2" fill="#66bb6a"/><path d="M797 594Q797 581 810.5 579Q824 581 824 594Z" fill="#4caf50"/><path d="M797 594Q797 581 810.5 579V594Z" fill="#66bb6a"/><ellipse cx="810.5" cy="562" rx="10" ry="13" fill="#81c784"/><path d="M810.5 549A10 13 0 0 0 810.5 575Z" fill="#a5d6a7"/></g><g><clipPath id="gclip"><circle cx="1003.2" cy="570.2" r="21.5"/></clipPath><g clip-path="url(#gclip)"><rect x="980" y="547" width="46" height="47" fill="#b3e5fc"/><path d="M980 547H1022L980 589Z" fill="#e1f5fe"/><circle cx="1003.2" cy="570.2" r="20.4" fill="none" stroke="#039be5" stroke-width="2.4" stroke-dasharray="34 200" transform="rotate(-12 1003.2 570.2)"/><path d="M982.6 568Q983.5 580 992 587.5" fill="none" stroke="#29b6f6" stroke-width="1.6"/><path d="M993.9 551.9H996.9V555.2H1003.9V550.4L1006.9 549.3L1015 552.6L1015.8 554.5L1008.4 554.1V556.3L1003.9 558.6V562.3L1008.4 560.8L1017.6 562.3V563.8L1008.4 562.3L1003.2 563.8L1001 566.7V572.7L998 573.8L995.8 576.4L991.3 573.4L986.1 570.4L985 566L988.7 561.2L993.5 559.3Z" fill="#29b6f6"/><path d="M998 573.8L1008.4 574.1L1009.8 580.1L1010.6 585.6L1015.8 586.7L1012 589.3L1004.7 591.6L995.8 590.4L992 585.6L996.5 580.1L995.8 576.4Z" fill="#039be5"/></g></g><g><rect x="1186" y="549" width="43" height="42" rx="2.5" fill="#455a64"/><rect x="1190.3" y="549" width="1" height="42" fill="#37474f" opacity="0.6"/><rect x="1194.6" y="549" width="1" height="42" fill="#37474f" opacity="0.6"/><rect x="1198.9" y="549" width="1" height="42" fill="#37474f" opacity="0.6"/><rect x="1203.2" y="549" width="1" height="42" fill="#37474f" opacity="0.6"/><rect x="1207.5" y="549" width="1" height="42" fill="#37474f" opacity="0.6"/><rect x="1211.8" y="549" width="1" height="42" fill="#37474f" opacity="0.6"/><rect x="1216.1" y="549" width="1" height="42" fill="#37474f" opacity="0.6"/><rect x="1220.4" y="549" width="1" height="42" fill="#37474f" opacity="0.6"/><rect x="1224.7" y="549" width="1" height="42" fill="#37474f" opacity="0.6"/><rect x="1186" y="553.3" width="43" height="1" fill="#37474f" opacity="0.6"/><rect x="1186" y="557.6" width="43" height="1" fill="#37474f" opacity="0.6"/><rect x="1186" y="561.9" width="43" height="1" fill="#37474f" opacity="0.6"/><rect x="1186" y="566.2" width="43" height="1" fill="#37474f" opacity="0.6"/><rect x="1186" y="570.5" width="43" height="1" fill="#37474f" opacity="0.6"/><rect x="1186" y="574.8" width="43" height="1" fill="#37474f" opacity="0.6"/><rect x="1186" y="579.1" width="43" height="1" fill="#37474f" opacity="0.6"/><rect x="1186" y="583.4" width="43" height="1" fill="#37474f" opacity="0.6"/><rect x="1186" y="587.7" width="43" height="1" fill="#37474f" opacity="0.6"/><rect x="1192" y="555" width="4" height="36" fill="#29b6f6"/><rect x="1190" y="561" width="5" height="30" fill="#ffa726"/><rect x="1201" y="554" width="4" height="37" fill="#29b6f6"/><rect x="1199" y="558" width="5" height="33" fill="#ffa726"/><rect x="1210" y="560" width="4" height="31" fill="#29b6f6"/><rect x="1209" y="564" width="5" height="27" fill="#ffa726"/><rect x="1223" y="566" width="3" height="25" fill="#29b6f6"/><rect x="1219" y="555" width="4.5" height="36" fill="#fb8c00"/></g><g><rect x="1353" y="551" width="48" height="37" fill="#f57c00"/><path d="M1353 551H1401L1353 588Z" fill="#ffa726"/><rect x="1357" y="554" width="41" height="7" fill="#fff"/><rect x="1357" y="564" width="18" height="3" fill="#fff"/><rect x="1357" y="570" width="12" height="3" fill="#fff"/><rect x="1380" y="563" width="18" height="22" fill="#b3e5fc"/><ellipse cx="1389" cy="572" rx="5" ry="6.5" fill="#f5a862"/><path d="M1382 585Q1382 579 1389 578Q1396 579 1396 585Z" fill="#0288d1"/></g><g><rect x="1565" y="552" width="20" height="21" fill="#64bb1c"/><path d="M1585 552V573H1565Z" fill="#53a317"/><rect x="1565" y="572.5" width="19" height="20.5" fill="#64bb1c"/><path d="M1584 572.5V593H1565Z" fill="#53a317"/><rect x="1584" y="572.5" width="20" height="20.5" fill="#64bb1c"/><path d="M1604 572.5V593H1584Z" fill="#53a317"/><g transform="rotate(15 1598 559)"><rect x="1588.5" y="549.5" width="19" height="19" fill="#78909c"/><path d="M1607.5 549.5V568.5H1588.5Z" fill="#607d8b"/></g></g><g><rect x="1787" y="546" width="21" height="21" fill="#b3e5fc"/><path d="M1787 546H1808L1787 567Z" fill="#e1f5fe"/><rect x="1774" y="552" width="28" height="29" fill="#4fc3f7"/><path d="M1774 552H1802L1774 581Z" fill="#b3e5fc"/><rect x="1760" y="560" width="34" height="34" fill="#039be5"/><path d="M1760 560H1794L1760 594Z" fill="#29b6f6"/></g><path d="M1944 570V580Q1944 586 1950 586H1953" fill="none" stroke="#ffc107" stroke-width="2.5"/><rect x="1931" y="546" width="27" height="21" fill="#455a64"/><rect x="1932.5" y="548" width="24" height="17.5" fill="#039be5"/><path d="M1932.5 548H1956.5L1932.5 565.5Z" fill="#29b6f6"/><rect x="1941.0" y="567" width="7" height="2" fill="#546e7a"/><rect x="1938.5" y="569" width="12" height="1.5" fill="#455a64"/><rect x="1952" y="570" width="27" height="21" fill="#455a64"/><rect x="1953.5" y="572" width="24" height="17.5" fill="#039be5"/><path d="M1953.5 572H1977.5L1953.5 589.5Z" fill="#29b6f6"/><rect x="1962.0" y="591" width="7" height="2" fill="#546e7a"/><rect x="1959.5" y="593" width="12" height="1.5" fill="#455a64"/><g><rect x="2104" y="548" width="37" height="46" rx="2" fill="#f57c00"/><path d="M2111 548H2141L2111 594Z" fill="#fb8c00"/><path d="M2106 548H2111V594H2106Q2103 594 2103 591V551Q2103 548 2106 548Z" fill="#546e7a"/><rect x="2138" y="550" width="1.3" height="42" fill="#fff"/><path d="M2113 573L2118.5 560L2124 573M2115 568H2122" fill="none" stroke="#ffcc80" stroke-width="2.2"/><path d="M2125 568H2135L2126 581H2136" fill="none" stroke="#ffcc80" stroke-width="2.2"/></g><g><rect x="2271.5" y="553.5" width="33" height="39" fill="#fafafa" stroke="#ff8f00" stroke-width="3"/><path d="M2304 553V594H2271Z" fill="none"/><path d="M2275 591L2302 558V591Z" fill="#eceff1"/><rect x="2276" y="549" width="24" height="9" fill="#546e7a"/><rect x="2276" y="549" width="24" height="4.5" fill="#78909c"/><rect x="2284.5" y="546" width="8.5" height="3" fill="#78909c"/><path d="M2281 567.5L2286 572L2296 561" fill="none" stroke="#90a4ae" stroke-width="3"/><path d="M2290 582L2306 566" stroke="#039be5" stroke-width="6"/><path d="M2304 564L2309 569L2312 566L2307 561Z" fill="#f4511e"/><path d="M2286 586L2288 579L2293 584Z" fill="#ffcc80"/><path d="M2285 586L2286.5 582.5L2289 585Z" fill="#455a64"/></g><g><rect x="252" y="807" width="36" height="29" fill="#81d4fa"/><path d="M252 809L270 828L288 809V836H252Z" fill="#b3e5fc"/><path d="M252 836L270 818L288 836Z" fill="#81d4fa"/><path d="M252 809H288L270 828Z" fill="#e1f5fe"/><path d="M252 809L270 827L288 809" fill="none" stroke="#4fc3f7" stroke-width="1.3"/><rect x="252" y="807" width="36" height="2" fill="#cfd8dc"/><rect x="252" y="834.5" width="36" height="1.5" fill="#4fb3e6"/></g><path d="M569 806L590 802V838L569 836Z" fill="#2b579a"/><rect x="590" y="806.5" width="14.5" height="30" fill="#fff" stroke="#2b579a" stroke-width="1.3"/><rect x="590" y="811" width="11" height="1.3" fill="#2b579a"/><rect x="590" y="815.5" width="11" height="1.3" fill="#2b579a"/><rect x="590" y="819.5" width="11" height="1.3" fill="#2b579a"/><rect x="590" y="824" width="11" height="1.3" fill="#2b579a"/><rect x="590" y="828.5" width="11" height="1.3" fill="#2b579a"/><path d="M572.5 813L575.5 827L578.5 817L581.5 827L584.5 813" fill="none" stroke="#fff" stroke-width="2.3"/><path d="M569 931L590 927V963L569 961Z" fill="#d24726"/><rect x="590" y="931.5" width="14.5" height="30" fill="#fff" stroke="#d24726" stroke-width="1.3"/><path d="M574 953V937H579Q584 937 584 942Q584 947 579 947H575" fill="none" stroke="#fff" stroke-width="2.8"/><path d="M591 937A7 7 0 0 1 598 944H591Z" fill="#d24726"/><rect x="590" y="953" width="9" height="1.3" fill="#d24726"/><path d="M569 1016L590 1012V1048L569 1046Z" fill="#217346"/><rect x="590" y="1016.5" width="14.5" height="30" fill="#fff" stroke="#217346" stroke-width="1.3"/><rect x="591.5" y="1020" width="4.5" height="3" fill="#217346"/><rect x="597.5" y="1020" width="4.5" height="3" fill="#217346"/><rect x="591.5" y="1024.5" width="4.5" height="3" fill="#217346"/><rect x="597.5" y="1024.5" width="4.5" height="3" fill="#217346"/><rect x="591.5" y="1029" width="4.5" height="3" fill="#217346"/><rect x="597.5" y="1029" width="4.5" height="3" fill="#217346"/><rect x="591.5" y="1033.5" width="4.5" height="3" fill="#217346"/><rect x="597.5" y="1033.5" width="4.5" height="3" fill="#217346"/><rect x="591.5" y="1038" width="4.5" height="3" fill="#217346"/><rect x="597.5" y="1038" width="4.5" height="3" fill="#217346"/><path d="M573 1023L582 1038M582 1023L573 1038" fill="none" stroke="#fff" stroke-width="2.8"/><g><path d="M575 842H598L604.5 848.5V876.5H575Z" fill="#f2f2f2" stroke="#d6d6d6" stroke-width="1"/><rect x="575" y="875" width="29.5" height="1.5" fill="#9e9e9e"/><rect x="571" y="845" width="22" height="9" fill="#e62000"/><path d="M588 858V867L583 873M588 867L596 869" fill="none" stroke="#e53935" stroke-width="1.4"/></g><g><path d="M573 1098H592L601 1107V1134H573Z" fill="#b3e5fc"/><path d="M573 1098H592L601 1107L573 1134Z" fill="#e1f5fe"/><path d="M592 1098L601 1107H592Z" fill="#29b6f6"/><rect x="575" y="1101.0" width="14" height="1.5" fill="#90a4ae"/><rect x="575" y="1104.3" width="14" height="1.5" fill="#90a4ae"/><rect x="575" y="1107.6" width="14" height="1.5" fill="#90a4ae"/><rect x="575" y="1110.9" width="22" height="1.5" fill="#90a4ae"/><rect x="575" y="1114.2" width="22" height="1.5" fill="#90a4ae"/><rect x="575" y="1117.5" width="22" height="1.5" fill="#90a4ae"/><rect x="575" y="1120.8" width="22" height="1.5" fill="#90a4ae"/><rect x="575" y="1124.1" width="22" height="1.5" fill="#90a4ae"/></g><g><path d="M1004 813H1008V811H1015V813H1017.5V810H1019V807H1031V810H1033V813H1040V837H1004Z" fill="#546e7a"/><rect x="1021" y="809.3" width="8" height="1.8" fill="#fff"/><rect x="1004" y="818" width="9" height="19" fill="#455a64"/><circle cx="1025.5" cy="825.5" r="10.5" fill="#90a4ae"/><circle cx="1025.5" cy="825.5" r="9.5" fill="#37474f"/><circle cx="1025.5" cy="825.5" r="8" fill="#29b6f6"/><path d="M1019.8 831.2A8 8 0 0 1 1031.2 819.8Z" fill="#4fc3f7"/></g><g><path d="M1004 852H1008V850H1015V852H1017.5V849H1019V846H1031V849H1033V852H1040V876H1004Z" fill="#546e7a"/><rect x="1021" y="848.3" width="8" height="1.8" fill="#fff"/><rect x="1004" y="857" width="9" height="19" fill="#455a64"/><circle cx="1025.5" cy="864.5" r="10.5" fill="#90a4ae"/><circle cx="1025.5" cy="864.5" r="9.5" fill="#37474f"/><circle cx="1025.5" cy="864.5" r="8" fill="#29b6f6"/><path d="M1019.8 870.2A8 8 0 0 1 1031.2 858.8Z" fill="#4fc3f7"/></g><g><path d="M1004 891H1008V889H1015V891H1017.5V888H1019V885H1031V888H1033V891H1040V915H1004Z" fill="#546e7a"/><rect x="1021" y="887.3" width="8" height="1.8" fill="#fff"/><rect x="1004" y="896" width="9" height="19" fill="#455a64"/><circle cx="1025.5" cy="903.5" r="10.5" fill="#90a4ae"/><circle cx="1025.5" cy="903.5" r="9.5" fill="#37474f"/><circle cx="1025.5" cy="903.5" r="8" fill="#29b6f6"/><path d="M1019.8 909.2A8 8 0 0 1 1031.2 897.8Z" fill="#4fc3f7"/></g><g><path d="M1004 930H1008V928H1015V930H1017.5V927H1019V924H1031V927H1033V930H1040V954H1004Z" fill="#546e7a"/><rect x="1021" y="926.3" width="8" height="1.8" fill="#fff"/><rect x="1004" y="935" width="9" height="19" fill="#455a64"/><circle cx="1025.5" cy="942.5" r="10.5" fill="#90a4ae"/><circle cx="1025.5" cy="942.5" r="9.5" fill="#37474f"/><circle cx="1025.5" cy="942.5" r="8" fill="#29b6f6"/><path d="M1019.8 948.2A8 8 0 0 1 1031.2 936.8Z" fill="#4fc3f7"/></g><g><path d="M1004 969H1008V967H1015V969H1017.5V966H1019V963H1031V966H1033V969H1040V993H1004Z" fill="#546e7a"/><rect x="1021" y="965.3" width="8" height="1.8" fill="#fff"/><rect x="1004" y="974" width="9" height="19" fill="#455a64"/><circle cx="1025.5" cy="981.5" r="10.5" fill="#90a4ae"/><circle cx="1025.5" cy="981.5" r="9.5" fill="#37474f"/><circle cx="1025.5" cy="981.5" r="8" fill="#29b6f6"/><path d="M1019.8 987.2A8 8 0 0 1 1031.2 975.8Z" fill="#4fc3f7"/></g><g><path d="M1287 806L1309 802V837.5L1287 834Z" fill="#0072c6"/><rect x="1309" y="810.5" width="13.5" height="19.5" fill="#fff" stroke="#0072c6" stroke-width="1.3"/><path d="M1309.5 814L1316 821L1322 814" fill="none" stroke="#0072c6" stroke-width="1.5"/><ellipse cx="1297.5" cy="820" rx="5" ry="7" fill="none" stroke="#fff" stroke-width="2.6"/></g><g><path d="M1287 892H1300.5L1302 896H1322.5V922.5H1287Z" fill="#ffb300"/><rect x="1287" y="896.5" width="35.5" height="26.0" fill="#ffca28"/><path d="M1287 922.5L1322.5 901V896.5H1287Z" fill="#ffd54f"/><rect x="1287" y="921.0" width="35.5" height="1.5" fill="#ffb300"/><rect x="1287" y="912" width="31.5" height="2.2" fill="#78909c"/><rect x="1317.5" y="910" width="5" height="6" fill="#607d8b"/></g><g><path d="M1287 931H1300.5L1302 935H1322.5V961.5H1287Z" fill="#ffb300"/><rect x="1287" y="935.5" width="35.5" height="26.0" fill="#ffca28"/><path d="M1287 961.5L1322.5 940V935.5H1287Z" fill="#ffd54f"/><rect x="1287" y="960.0" width="35.5" height="1.5" fill="#ffb300"/><rect x="1287" y="951" width="31.5" height="2.2" fill="#78909c"/><rect x="1317.5" y="949" width="5" height="6" fill="#607d8b"/></g><g><path d="M1964 988H1977.5L1979 992H2000V1018.5H1964Z" fill="#ffb300"/><rect x="1964" y="992.5" width="36" height="26.0" fill="#ffca28"/><path d="M1964 1018.5L2000 997V992.5H1964Z" fill="#ffd54f"/><rect x="1964" y="1017.0" width="36" height="1.5" fill="#ffb300"/></g><g><rect x="1657" y="778" width="11" height="31" fill="#78909c"/><rect x="1657" y="778" width="4" height="31" fill="#546e7a"/><rect x="1664.5" y="780" width="1.5" height="1.5" fill="#8bc34a"/><rect x="1632" y="783.5" width="28" height="21" fill="#455a64"/><rect x="1633.5" y="785.5" width="25" height="17.5" fill="#039be5"/><path d="M1633.5 785.5H1658.5L1633.5 803Z" fill="#29b6f6"/><rect x="1632" y="783.5" width="28" height="1.5" fill="#eceff1"/><rect x="1642" y="804.5" width="7" height="2.5" fill="#546e7a"/><rect x="1640" y="807" width="14" height="2" fill="#455a64"/></g><g><path d="M1991 818V811Q1991 803 2000 803Q2009 803 2009 811V818" fill="none" stroke="#607d8b" stroke-width="3.2"/><rect x="1986" y="818" width="28" height="20" fill="#fdd835"/><rect x="2000" y="818" width="14" height="20" fill="#fbc02d" opacity="0.6"/><rect x="1986" y="836" width="28" height="2" fill="#f9a825"/><circle cx="2000" cy="826" r="2" fill="#37474f"/><path d="M1998.5 827H2001.5L2002 833H1998Z" fill="#37474f"/></g><g><path d="M1991 857V850Q1991 842 2000 842Q2009 842 2009 850V857" fill="none" stroke="#607d8b" stroke-width="3.2"/><rect x="1986" y="857" width="28" height="20" fill="#fdd835"/><rect x="2000" y="857" width="14" height="20" fill="#fbc02d" opacity="0.6"/><rect x="1986" y="875" width="28" height="2" fill="#f9a825"/><circle cx="2000" cy="865" r="2" fill="#37474f"/><path d="M1998.5 866H2001.5L2002 872H1998Z" fill="#37474f"/></g><g><rect x="1986" y="927" width="28" height="36" fill="#b3e5fc" stroke="#90caf9" stroke-width="1"/><path d="M1986 927H2014L1986 963Z" fill="#e1f5fe"/><rect x="1990" y="930.0" width="18" height="1.6" fill="#78909c"/><rect x="1993" y="933.2" width="12" height="1.6" fill="#78909c"/><rect x="1990" y="936.4" width="12" height="1.6" fill="#78909c"/><rect x="1993" y="939.6" width="18" height="1.6" fill="#78909c"/><rect x="1990" y="942.8" width="12" height="1.6" fill="#78909c"/><rect x="1993" y="946.0" width="12" height="1.6" fill="#78909c"/><rect x="1990" y="949.2" width="18" height="1.6" fill="#78909c"/><rect x="1993" y="952.4" width="12" height="1.6" fill="#78909c"/><rect x="1990" y="955.6" width="12" height="1.6" fill="#78909c"/><rect x="1993" y="958.8" width="18" height="1.6" fill="#78909c"/></g></svg>
<span class=t style="left:41.60px;top:14.70px;font-size:18px;line-height:18px;font-weight:400;color:#fff;letter-spacing:-0.207px">Test - Intella Professional 3.0-Snapshot</span><span class=t style="left:10.80px;top:54.12px;font-size:17.5px;line-height:17.5px;font-weight:400;color:#000;letter-spacing:-1.001px">File</span><span class=t style="left:53.00px;top:54.12px;font-size:17.5px;line-height:17.5px;font-weight:400;color:#000;letter-spacing:-0.208px">View</span><span class=t style="left:109.70px;top:54.12px;font-size:17.5px;line-height:17.5px;font-weight:400;color:#000;letter-spacing:-0.056px">Export</span><span class=t style="left:179.80px;top:54.12px;font-size:17.5px;line-height:17.5px;font-weight:400;color:#000;letter-spacing:-0.100px">Help</span><span class=t style="left:2367.00px;top:53.12px;font-size:17.5px;line-height:17.5px;font-weight:400;color:#1040f0;letter-spacing:-0.335px">Update notification: disabled</span><span class=t style="left:55.00px;top:116.55px;font-size:17px;line-height:17px;font-weight:400;color:#fff;letter-spacing:-0.541px">Welcome</span><span class=t style="left:188.00px;top:116.55px;font-size:17px;line-height:17px;font-weight:400;color:#fff;letter-spacing:-0.929px">Sources</span><span class=t style="left:312.50px;top:113.55px;font-size:17px;line-height:17px;font-weight:400;color:#000;letter-spacing:0.118px">Insight</span><span class=t style="left:430.00px;top:116.55px;font-size:17px;line-height:17px;font-weight:400;color:#fff;letter-spacing:-0.875px">Search</span><span class=t style="left:545.40px;top:116.55px;font-size:17px;line-height:17px;font-weight:400;color:#fff;letter-spacing:-0.711px">Devices</span><span class=t style="left:668.00px;top:116.55px;font-size:17px;line-height:17px;font-weight:400;color:#fff;letter-spacing:-0.592px">Keywords</span><span class=t style="left:808.00px;top:116.55px;font-size:17px;line-height:17px;font-weight:400;color:#fff;letter-spacing:-0.005px">Identities</span><span class=t style="left:670.20px;top:228.70px;font-size:36px;line-height:36px;font-weight:700;color:#777;letter-spacing:0.398px;transform:scaleX(1.0406);transform-origin:0 0">Test</span><span class=t style="left:670.00px;top:293.55px;font-size:17px;line-height:17px;font-weight:700;color:#000;letter-spacing:0.319px;transform:scaleX(1.0632);transform-origin:0 0">77 MB</span><span class=t style="left:670.00px;top:315.98px;font-size:16.5px;line-height:16.5px;font-weight:400;color:#000;letter-spacing:-0.219px">Case size</span><span class=t style="left:670.00px;top:360.55px;font-size:17px;line-height:17px;font-weight:700;color:#000;letter-spacing:0.320px;transform:scaleX(1.0873);transform-origin:0 0">2.7.3-Snapshot</span><span class=t style="left:670.00px;top:383.48px;font-size:16.5px;line-height:16.5px;font-weight:400;color:#000;letter-spacing:0.585px">Intella version</span><span class=t style="left:910.80px;top:293.55px;font-size:17px;line-height:17px;font-weight:700;color:#000;letter-spacing:0.301px;transform:scaleX(1.0857);transform-origin:0 0">June 19, 2024, 9:39:41 AM Central European Summer Time</span><span class=t style="left:910.80px;top:315.98px;font-size:16.5px;line-height:16.5px;font-weight:400;color:#000;letter-spacing:0.083px">Created</span><span class=t style="left:910.80px;top:360.55px;font-size:17px;line-height:17px;font-weight:700;color:#000;letter-spacing:0.422px;transform:scaleX(1.1269);transform-origin:0 0">D:\cases\test</span><span class=t style="left:910.80px;top:383.48px;font-size:16.5px;line-height:16.5px;font-weight:400;color:#000;letter-spacing:0.281px">Case folder</span><span class=t style="left:2333.00px;top:285.98px;font-size:16.5px;line-height:16.5px;font-weight:400;color:#000;letter-spacing:-0.138px">Export</span><span class=t style="left:274.70px;top:602.55px;font-size:17px;line-height:17px;font-weight:400;color:#000;letter-spacing:-0.865px">Types</span><span class=t style="left:427.00px;top:606.05px;font-size:17px;line-height:17px;font-weight:400;color:#000;letter-spacing:-0.705px">Evidence</span><span class=t style="left:599.00px;top:606.05px;font-size:17px;line-height:17px;font-weight:400;color:#000;letter-spacing:-0.596px">Custodians</span><span class=t style="left:790.00px;top:606.05px;font-size:17px;line-height:17px;font-weight:400;color:#000;letter-spacing:-2.242px">GDPR</span><span class=t style="left:939.60px;top:606.05px;font-size:17px;line-height:17px;font-weight:400;color:#000;letter-spacing:0.262px">Internet Artifacts</span><span class=t style="left:1175.50px;top:606.05px;font-size:17px;line-height:17px;font-weight:400;color:#000;letter-spacing:-0.344px">Timeline</span><span class=t style="left:1343.00px;top:606.05px;font-size:17px;line-height:17px;font-weight:400;color:#000;letter-spacing:0.061px">Identities</span><span class=t style="left:1521.80px;top:606.05px;font-size:17px;line-height:17px;font-weight:400;color:#000;letter-spacing:0.021px">Registry Artifacts</span><span class=t style="left:1755.90px;top:606.05px;font-size:17px;line-height:17px;font-weight:400;color:#000;letter-spacing:-0.661px">Devices</span><span class=t style="left:1921.00px;top:606.05px;font-size:17px;line-height:17px;font-weight:400;color:#000;letter-spacing:-0.408px">Networks</span><span class=t style="left:2107.00px;top:606.05px;font-size:17px;line-height:17px;font-weight:400;color:#000;letter-spacing:0.104px">Text</span><span class=t style="left:2253.60px;top:606.05px;font-size:17px;line-height:17px;font-weight:400;color:#000;letter-spacing:-0.228px">Workflow</span><span class=t style="left:235.40px;top:721.75px;font-size:25px;line-height:25px;font-weight:700;color:#707070;letter-spacing:-0.051px;transform:scaleX(0.9926);transform-origin:0 0">Communication</span><span class=t style="left:551.30px;top:721.75px;font-size:25px;line-height:25px;font-weight:700;color:#707070;letter-spacing:-0.054px;transform:scaleX(0.9926);transform-origin:0 0">Documents</span><span class=t style="left:986.60px;top:721.75px;font-size:25px;line-height:25px;font-weight:700;color:#707070;letter-spacing:-0.111px;transform:scaleX(0.9856);transform-origin:0 0">Media</span><span class=t style="left:1270.30px;top:721.75px;font-size:25px;line-height:25px;font-weight:700;color:#707070;letter-spacing:-0.108px;transform:scaleX(0.9829);transform-origin:0 0">Containers</span><span class=t style="left:1633.00px;top:721.75px;font-size:25px;line-height:25px;font-weight:700;color:#707070;letter-spacing:-0.119px;transform:scaleX(0.9846);transform-origin:0 0">System</span><span class=t style="left:1964.40px;top:721.75px;font-size:25px;line-height:25px;font-weight:700;color:#707070;letter-spacing:-0.140px;transform:scaleX(0.9801);transform-origin:0 0">Others</span><span class=t style="left:235.60px;top:776.55px;font-size:17px;line-height:17px;font-weight:700;color:#000;letter-spacing:0.046px;transform:scaleX(1.0105);transform-origin:0 0">E-mail</span><span class=t style="left:446.75px;top:776.55px;font-size:17px;line-height:17px;font-weight:700;color:#000;letter-spacing:0.000px">1,621</span><span class=t style="left:301.00px;top:812.98px;font-size:16.5px;line-height:16.5px;font-weight:400;color:#000;letter-spacing:-0.258px">Email Message</span><span class=t style="left:449.30px;top:812.98px;font-size:16.5px;line-height:16.5px;font-weight:400;color:#000;letter-spacing:0.000px">1,621</span><span class=t style="left:551.00px;top:776.55px;font-size:17px;line-height:17px;font-weight:700;color:#000;letter-spacing:0.081px;transform:scaleX(1.0195);transform-origin:0 0">Word processing</span><span class=t style="left:902.58px;top:776.55px;font-size:17px;line-height:17px;font-weight:700;color:#000;letter-spacing:0.000px">21</span><span class=t style="left:617.00px;top:812.98px;font-size:16.5px;line-height:16.5px;font-weight:400;color:#000;letter-spacing:0.085px">Microsoft Word Document</span><span class=t style="left:903.64px;top:812.98px;font-size:16.5px;line-height:16.5px;font-weight:400;color:#000;letter-spacing:0.000px">12</span><span class=t style="left:617.00px;top:851.98px;font-size:16.5px;line-height:16.5px;font-weight:400;color:#000;letter-spacing:-0.272px">PDF Document</span><span class=t style="left:912.81px;top:851.98px;font-size:16.5px;line-height:16.5px;font-weight:400;color:#000;letter-spacing:0.000px">9</span><span class=t style="left:551.30px;top:900.55px;font-size:17px;line-height:17px;font-weight:700;color:#000;letter-spacing:0.111px;transform:scaleX(1.0284);transform-origin:0 0">Presentations</span><span class=t style="left:912.53px;top:900.55px;font-size:17px;line-height:17px;font-weight:700;color:#000;letter-spacing:0.000px">4</span><span class=t style="left:617.00px;top:936.98px;font-size:16.5px;line-height:16.5px;font-weight:400;color:#000;letter-spacing:-0.010px">Microsoft PowerPoint Presentation</span><span class=t style="left:912.81px;top:936.98px;font-size:16.5px;line-height:16.5px;font-weight:400;color:#000;letter-spacing:0.000px">4</span><span class=t style="left:550.80px;top:986.55px;font-size:17px;line-height:17px;font-weight:700;color:#000;letter-spacing:0.093px;transform:scaleX(1.0220);transform-origin:0 0">Spreadsheets</span><span class=t style="left:912.53px;top:986.55px;font-size:17px;line-height:17px;font-weight:700;color:#000;letter-spacing:0.000px">3</span><span class=t style="left:617.00px;top:1022.98px;font-size:16.5px;line-height:16.5px;font-weight:400;color:#000;letter-spacing:-0.031px">Microsoft Excel Workbook</span><span class=t style="left:912.81px;top:1022.98px;font-size:16.5px;line-height:16.5px;font-weight:400;color:#000;letter-spacing:0.000px">3</span><span class=t style="left:551.00px;top:1071.55px;font-size:17px;line-height:17px;font-weight:700;color:#000;letter-spacing:0.140px;transform:scaleX(1.0336);transform-origin:0 0">Other documents</span><span class=t style="left:912.53px;top:1071.55px;font-size:17px;line-height:17px;font-weight:700;color:#000;letter-spacing:0.000px">7</span><span class=t style="left:617.00px;top:1107.97px;font-size:16.5px;line-height:16.5px;font-weight:400;color:#000;letter-spacing:0.109px">Plain Text Document</span><span class=t style="left:912.81px;top:1107.97px;font-size:16.5px;line-height:16.5px;font-weight:400;color:#000;letter-spacing:0.000px">7</span><span class=t style="left:986.00px;top:776.55px;font-size:17px;line-height:17px;font-weight:700;color:#000;letter-spacing:0.240px;transform:scaleX(1.0503);transform-origin:0 0">Images</span><span class=t style="left:1174.42px;top:776.55px;font-size:17px;line-height:17px;font-weight:700;color:#000;letter-spacing:0.000px">326</span><span class=t style="left:1051.80px;top:812.98px;font-size:16.5px;line-height:16.5px;font-weight:400;color:#000;letter-spacing:-0.627px">JPEG Image</span><span class=t style="left:1175.47px;top:812.98px;font-size:16.5px;line-height:16.5px;font-weight:400;color:#000;letter-spacing:0.000px">120</span><span class=t style="left:1051.80px;top:851.98px;font-size:16.5px;line-height:16.5px;font-weight:400;color:#000;letter-spacing:-0.513px">PNG Image</span><span class=t style="left:1176.69px;top:851.98px;font-size:16.5px;line-height:16.5px;font-weight:400;color:#000;letter-spacing:0.000px">114</span><span class=t style="left:1051.80px;top:890.98px;font-size:16.5px;line-height:16.5px;font-weight:400;color:#000;letter-spacing:-0.052px">TIFF Image</span><span class=t style="left:1184.64px;top:890.98px;font-size:16.5px;line-height:16.5px;font-weight:400;color:#000;letter-spacing:0.000px">68</span><span class=t style="left:1051.80px;top:929.98px;font-size:16.5px;line-height:16.5px;font-weight:400;color:#000;letter-spacing:-0.094px">GIF Image</span><span class=t style="left:1184.64px;top:929.98px;font-size:16.5px;line-height:16.5px;font-weight:400;color:#000;letter-spacing:0.000px">21</span><span class=t style="left:1051.80px;top:968.98px;font-size:16.5px;line-height:16.5px;font-weight:400;color:#000;letter-spacing:-0.260px">EMF Image</span><span class=t style="left:1193.81px;top:968.98px;font-size:16.5px;line-height:16.5px;font-weight:400;color:#000;letter-spacing:0.000px">3</span><span class=t style="left:1270.30px;top:776.55px;font-size:17px;line-height:17px;font-weight:700;color:#000;letter-spacing:0.095px;transform:scaleX(1.0256);transform-origin:0 0">E-mail containers</span><span class=t style="left:1559.03px;top:776.55px;font-size:17px;line-height:17px;font-weight:700;color:#000;letter-spacing:0.000px">1</span><span class=t style="left:1336.00px;top:812.98px;font-size:16.5px;line-height:16.5px;font-weight:400;color:#000;letter-spacing:-0.117px">Microsoft Outlook PST File</span><span class=t style="left:1559.81px;top:812.98px;font-size:16.5px;line-height:16.5px;font-weight:400;color:#000;letter-spacing:0.000px">1</span><span class=t style="left:1270.30px;top:861.55px;font-size:17px;line-height:17px;font-weight:700;color:#000;letter-spacing:-0.006px;transform:scaleX(0.9988);transform-origin:0 0">Archives</span><span class=t style="left:1559.53px;top:861.55px;font-size:17px;line-height:17px;font-weight:700;color:#000;letter-spacing:0.000px">5</span><span class=t style="left:1336.00px;top:897.48px;font-size:16.5px;line-height:16.5px;font-weight:400;color:#000;letter-spacing:-0.076px">Rar Archives</span><span class=t style="left:1559.81px;top:897.48px;font-size:16.5px;line-height:16.5px;font-weight:400;color:#000;letter-spacing:0.000px">3</span><span class=t style="left:1336.00px;top:936.98px;font-size:16.5px;line-height:16.5px;font-weight:400;color:#000;letter-spacing:0.037px">Zip Archive</span><span class=t style="left:1559.81px;top:936.98px;font-size:16.5px;line-height:16.5px;font-weight:400;color:#000;letter-spacing:0.000px">2</span><span class=t style="left:1681.00px;top:783.98px;font-size:16.5px;line-height:16.5px;font-weight:400;color:#000;letter-spacing:0.126px">Network packet capture</span><span class=t style="left:1887.53px;top:783.55px;font-size:17px;line-height:17px;font-weight:700;color:#000;letter-spacing:0.000px">1</span><span class=t style="left:1964.00px;top:776.55px;font-size:17px;line-height:17px;font-weight:700;color:#000;letter-spacing:0.138px;transform:scaleX(1.0410);transform-origin:0 0">Security &amp; integrity</span><span class=t style="left:2201.68px;top:776.55px;font-size:17px;line-height:17px;font-weight:700;color:#000;letter-spacing:0.000px">10</span><span class=t style="left:2030.00px;top:812.98px;font-size:16.5px;line-height:16.5px;font-weight:400;color:#000;letter-spacing:-0.426px">PGP Signature File</span><span class=t style="left:2211.81px;top:812.98px;font-size:16.5px;line-height:16.5px;font-weight:400;color:#000;letter-spacing:0.000px">7</span><span class=t style="left:2030.00px;top:851.98px;font-size:16.5px;line-height:16.5px;font-weight:400;color:#000;letter-spacing:-0.325px">PKCS #7 Signature</span><span class=t style="left:2211.81px;top:851.98px;font-size:16.5px;line-height:16.5px;font-weight:400;color:#000;letter-spacing:0.000px">3</span><span class=t style="left:1964.00px;top:900.55px;font-size:17px;line-height:17px;font-weight:700;color:#000;letter-spacing:0.075px;transform:scaleX(1.0175);transform-origin:0 0">Source code</span><span class=t style="left:2211.53px;top:900.55px;font-size:17px;line-height:17px;font-weight:700;color:#000;letter-spacing:0.000px">6</span><span class=t style="left:2030.00px;top:936.98px;font-size:16.5px;line-height:16.5px;font-weight:400;color:#000;letter-spacing:-0.043px">DIFF file</span><span class=t style="left:2211.81px;top:936.98px;font-size:16.5px;line-height:16.5px;font-weight:400;color:#000;letter-spacing:0.000px">6</span><span class=t style="left:2012.00px;top:993.98px;font-size:16.5px;line-height:16.5px;font-weight:400;color:#000;letter-spacing:-0.236px">Folder</span><span class=t style="left:2201.58px;top:993.55px;font-size:17px;line-height:17px;font-weight:700;color:#000;letter-spacing:0.000px">41</span>
</body></html>
